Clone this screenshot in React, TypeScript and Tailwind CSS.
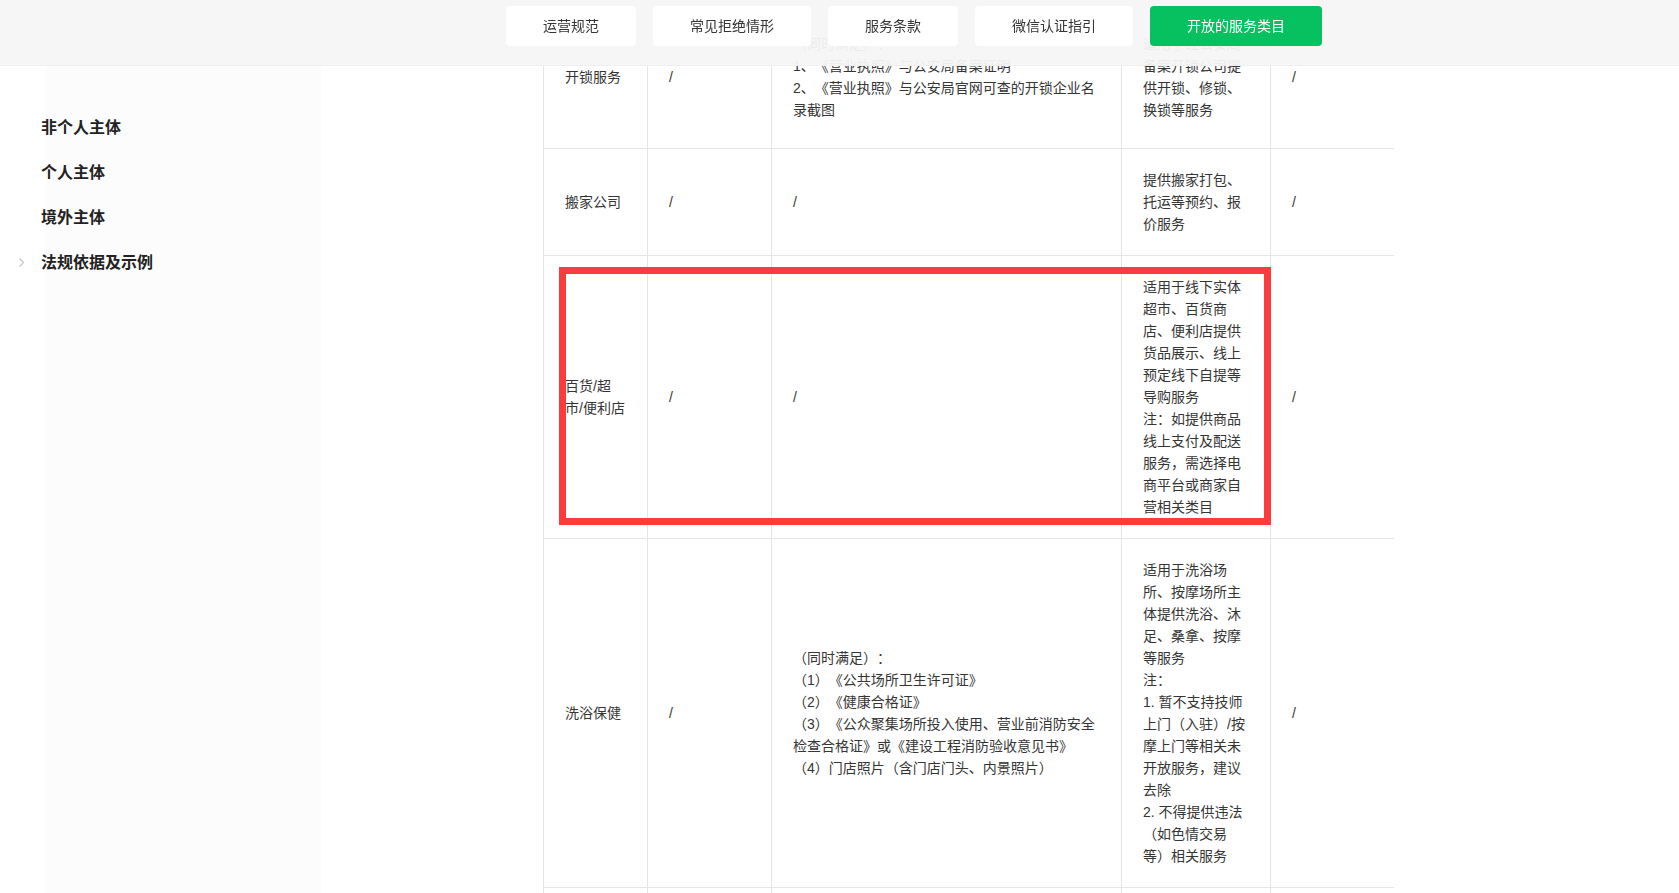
import React from "react";

type Row = {
  name: React.ReactNode;
  c2: string;
  c3: string[];
  c3Blue: boolean;
  c4: string[];
  c5: string;
  h?: string;
};

const rows: Row[] = [
  {
    name: "开锁服务",
    c2: "/",
    c3: [
      "（同时满足）：",
      "1、《营业执照》与公安局备案证明",
      "2、《营业执照》与公安局官网可查的开锁企业名录截图",
    ],
    c3Blue: true,
    c4: ["适用于经公安局备案开锁公司提供开锁、修锁、换锁等服务"],
    c5: "/",
    h: "h-[141px]",
  },
  {
    name: "搬家公司",
    c2: "/",
    c3: ["/"],
    c3Blue: false,
    c4: ["提供搬家打包、托运等预约、报价服务"],
    c5: "/",
  },
  {
    name: (
      <>
        百货/超
        <br />
        市/便利店
      </>
    ),
    c2: "/",
    c3: ["/"],
    c3Blue: false,
    c4: [
      "适用于线下实体超市、百货商店、便利店提供货品展示、线上预定线下自提等导购服务",
      "注：如提供商品线上支付及配送服务，需选择电商平台或商家自营相关类目",
    ],
    c5: "/",
  },
  {
    name: "洗浴保健",
    c2: "/",
    c3: [
      "（同时满足）：",
      "（1）《公共场所卫生许可证》",
      "（2）《健康合格证》",
      "（3）《公众聚集场所投入使用、营业前消防安全检查合格证》或《建设工程消防验收意见书》",
      "（4）门店照片（含门店门头、内景照片）",
    ],
    c3Blue: true,
    c4: [
      "适用于洗浴场所、按摩场所主体提供洗浴、沐足、桑拿、按摩等服务",
      "注：",
      "1. 暂不支持技师上门（入驻）/按摩上门等相关未开放服务，建议去除",
      "2. 不得提供违法（如色情交易等）相关服务",
    ],
    c5: "/",
  },
];

const navItems = ["运营规范", "常见拒绝情形", "服务条款", "微信认证指引"];
const sideItems = ["非个人主体", "个人主体", "境外主体"];

const cellBase =
  "border-b border-l border-[#e5e5e5] align-middle py-5 pl-[21px] pr-[21px] text-[14px] leading-[22px] text-[#353535]";
const emptyCell = "border-b border-l border-[#e5e5e5] h-[140px]";

export default function App() {
  return (
    <div className="relative h-screen w-full overflow-hidden bg-white font-['Liberation_Sans','Noto_Sans_CJK_SC',sans-serif] [text-spacing-trim:space-all]">
      {/* translucent sticky header */}
      <header className="fixed left-0 right-0 top-0 z-20 h-[66px] border-b border-[#efefef] bg-[#f6f6f6]/95">
        <nav className="flex gap-[17px] pl-[506px] pt-[6px]">
          {navItems.map((t) => (
            <button
              key={t}
              className="h-[40px] rounded-[4px] bg-white px-[37px] text-[14px] text-[#353535]"
            >
              {t}
            </button>
          ))}
          <button className="h-[40px] rounded-[4px] bg-[#07c160] px-[37px] text-[14px] text-white">
            开放的服务类目
          </button>
        </nav>
      </header>

      <div className="flex h-full">
        <aside className="h-full w-[321px] shrink-0 bg-[linear-gradient(90deg,#ffffff_0px,#ffffff_46px,#fcfcfc_46px,#fcfcfc_100%)] pt-[105px]">
          {sideItems.map((t) => (
            <div
              key={t}
              className="flex h-[45px] items-center pl-[41px] text-[16px] font-bold text-[#222222]"
            >
              {t}
            </div>
          ))}
          <div className="flex h-[45px] items-center text-[16px] font-bold text-[#222222]">
            <span className="flex w-[41px] justify-center pl-[1px]">
              <svg width="7" height="11" viewBox="0 0 7 11" fill="none">
                <polyline
                  points="1.5,1.5 5.5,5.5 1.5,9.5"
                  stroke="#c7c7c7"
                  strokeWidth="1.3"
                />
              </svg>
            </span>
            法规依据及示例
          </div>
        </aside>

        <main className="flex-1 pl-[222px] pt-[7px]">
          <div className="relative w-[850px]">
            <table className="w-[850px] table-fixed border-collapse">
              <colgroup>
                <col className="w-[104px]" />
                <col className="w-[124px]" />
                <col className="w-[350px]" />
                <col className="w-[149px]" />
                <col className="w-[123px]" />
              </colgroup>
              <tbody>
                {rows.map((r, i) => (
                  <tr key={i} className={r.h ?? ""}>
                    <td className={cellBase}>{r.name}</td>
                    <td className={cellBase}>{r.c2}</td>
                    <td
                      className={`${cellBase} ${
                        r.c3Blue ? "text-[#576b95]" : ""
                      }`}
                    >
                      {r.c3.map((l, k) => (
                        <p key={k}>{l}</p>
                      ))}
                    </td>
                    <td className={cellBase}>
                      {r.c4.map((l, k) => (
                        <p key={k}>{l}</p>
                      ))}
                    </td>
                    <td className={cellBase}>{r.c5}</td>
                  </tr>
                ))}
                <tr>
                  <td className={emptyCell} />
                  <td className={emptyCell} />
                  <td className={emptyCell} />
                  <td className={emptyCell} />
                  <td className={emptyCell} />
                </tr>
              </tbody>
            </table>

            {/* red annotation box */}
            <div className="pointer-events-none absolute left-[16px] top-[260px] h-[258px] w-[712px] border-[7px] border-[#fc3b3d]" />
          </div>
        </main>
      </div>
    </div>
  );
}
